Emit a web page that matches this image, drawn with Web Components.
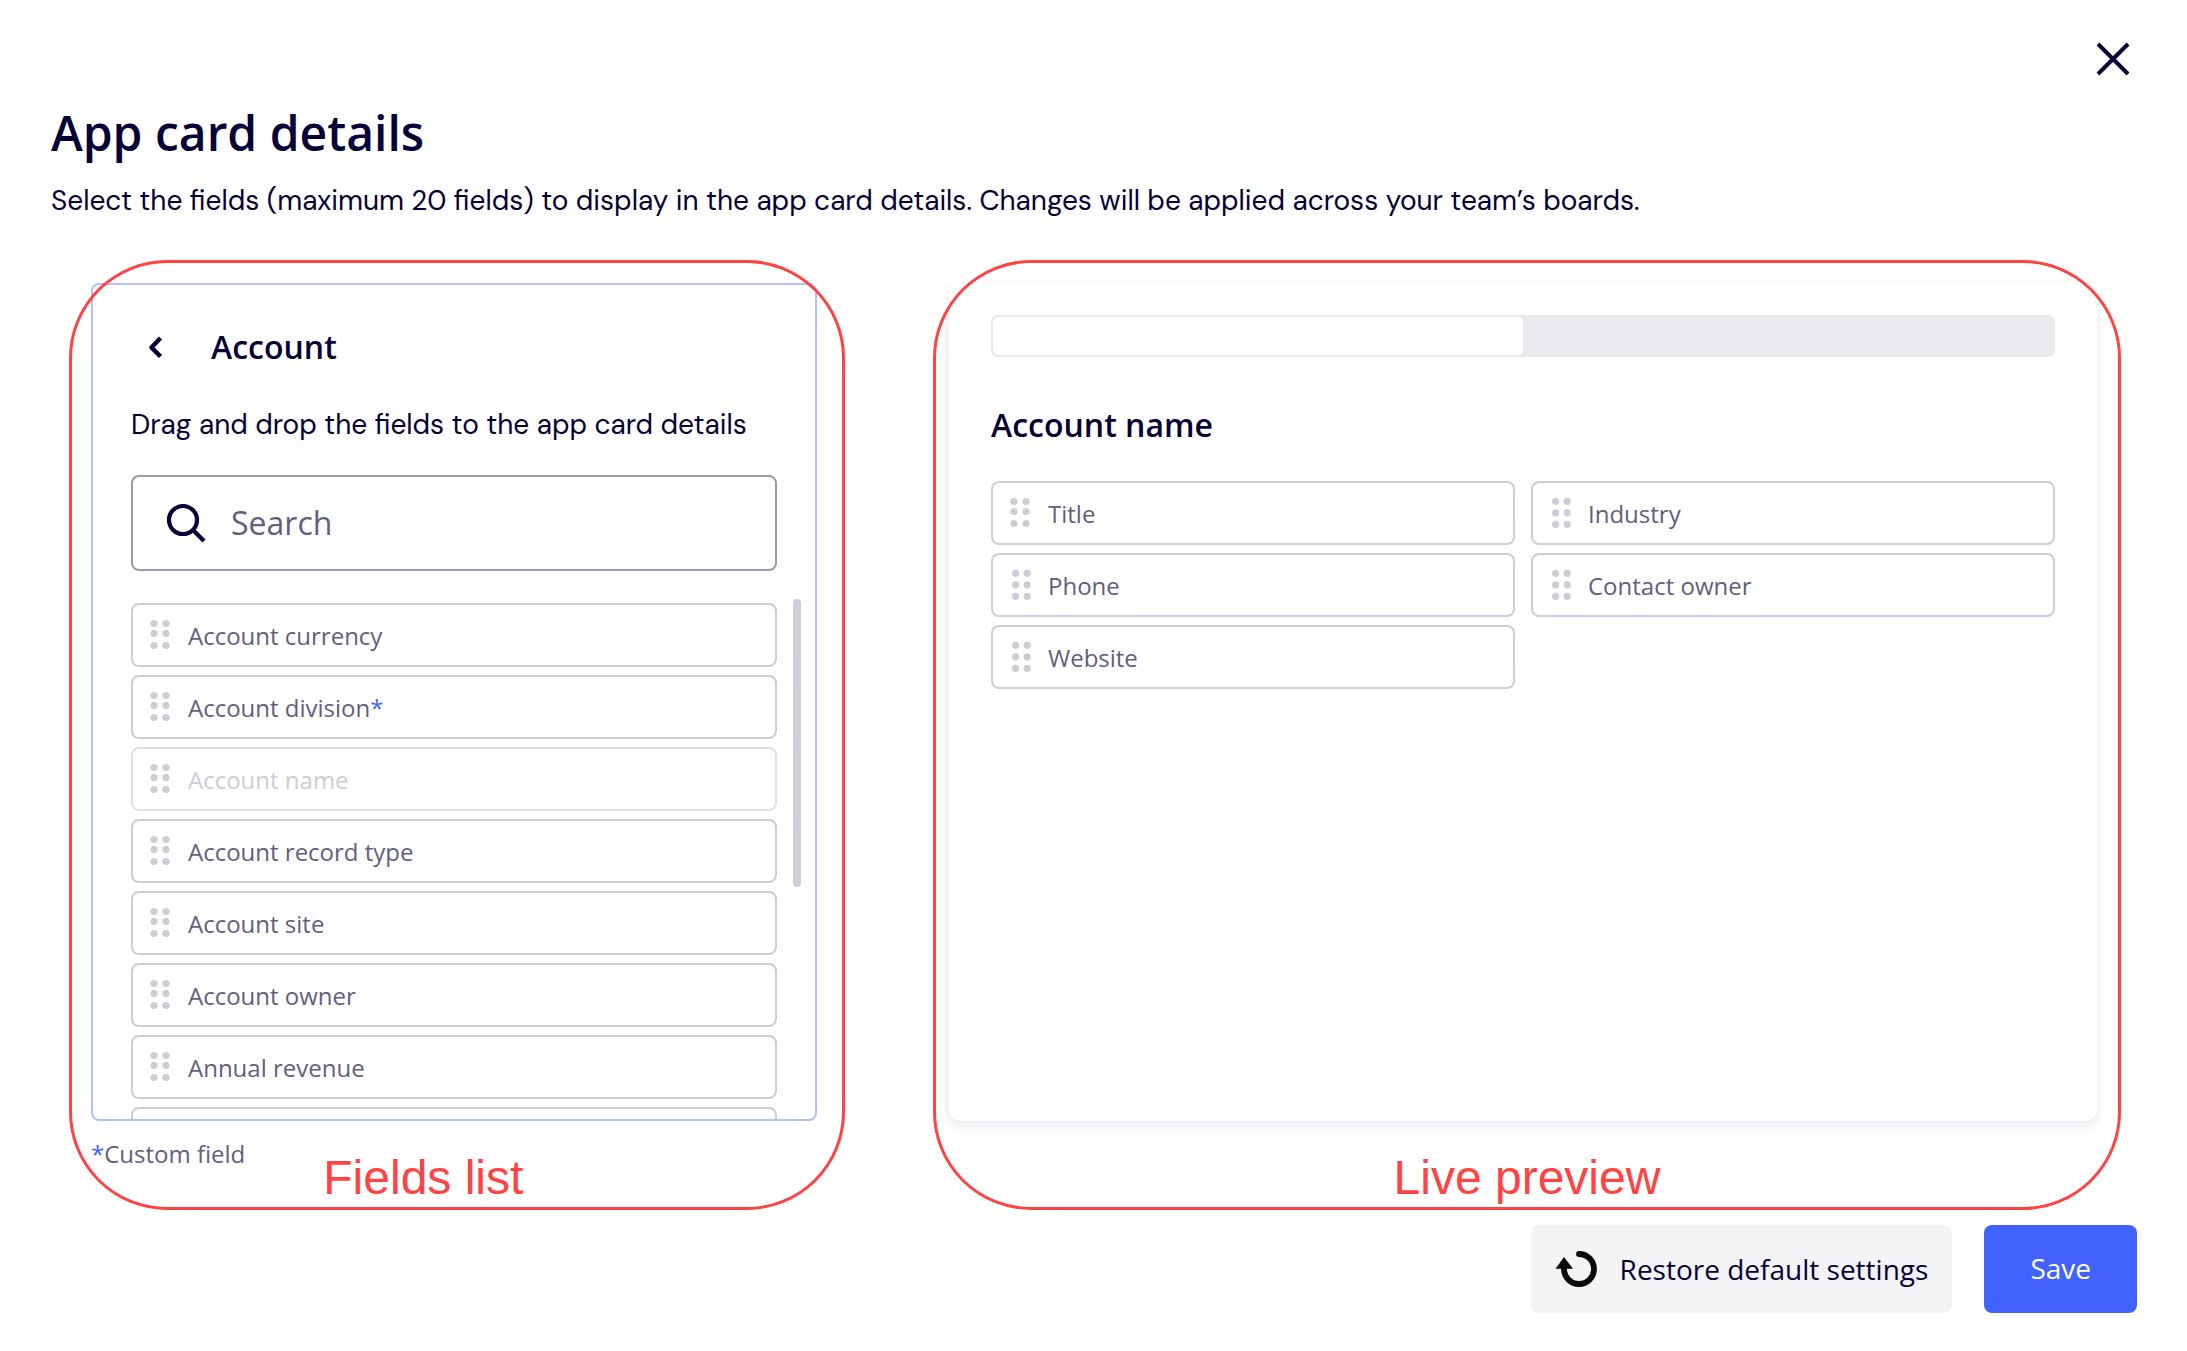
<!DOCTYPE html>
<html lang="en">
<head>
<meta charset="utf-8">
<title>App card details</title>
<style>
  html, body { height: 100%; }
  body {
    margin: 0;
    background: #fff;
    color: #050038;
    font-family: "Open Sans", sans-serif;
    --ink: #050038;
    --muted: #625e80;
    --faint: #cdccd7;
    --blue: #4262ff;
    --mark: #ff4343;
    --copy: "DM Sans", Inter, sans-serif;
  }
</style>
</head>
<body>

<card-dialog>
  <field-list slot="fields" heading="Account" hint="Drag and drop the fields to the app card details">
    <field-chip>Account currency</field-chip>
    <field-chip custom>Account division</field-chip>
    <field-chip disabled>Account name</field-chip>
    <field-chip>Account record type</field-chip>
    <field-chip>Account site</field-chip>
    <field-chip>Account owner</field-chip>
    <field-chip>Annual revenue</field-chip>
    <field-chip></field-chip>
  </field-list>
  <live-preview slot="preview" heading="Account name">
    <field-chip>Title</field-chip>
    <field-chip even>Industry</field-chip>
    <field-chip even>Phone</field-chip>
    <field-chip even>Contact owner</field-chip>
    <field-chip even>Website</field-chip>
  </live-preview>
</card-dialog>

<script>
'use strict';

/* ── <field-chip> : one draggable field ──────────────────── */
class FieldChip extends HTMLElement {

  constructor() {
    super();
    this.attachShadow({ mode: 'open' });
  }

  connectedCallback() {
    /* "even" spreads the grip dots evenly */
    const even = this.hasAttribute('even');
    const cols = even ? [24.6, 36.2] : [23, 35];
    const rows = even ? [20.3, 31.8, 43.3] : [20.5, 30.5, 42.5];
    const dots = rows.map(y => cols.map(x =>
      `<circle cx="${x - 16}" cy="${y - 16}" r="3.6"/>`).join('')).join('');
    const star = this.hasAttribute('custom') ? '<span class="star">*</span>' : '';

    this.shadowRoot.innerHTML = `
      <style>
        :host {
          display: flex;
          align-items: center;
          flex-shrink: 0;
          box-sizing: border-box;
          height: 64px;
          padding: 0 14px;
          gap: 17px;
          border: 2px solid var(--faint);
          border-radius: 8px;
          color: var(--muted);
          font-size: 24px;
          line-height: 32px;
          cursor: grab;
        }
        :host([disabled]) { border-color: #e1e0e7; color: var(--faint); cursor: default; }
        svg    { flex-shrink: 0; fill: var(--faint); }
        .label { padding-top: 2px; }
        .star  { color: var(--blue); }
      </style>
      <svg width="24" height="32" viewBox="0 0 24 32" aria-hidden="true">${dots}</svg>
      <span class="label"><slot></slot>${star}</span>
    `;
  }
}

/* ── <marked-area> : red outline with a caption below ────── */
class MarkedArea extends HTMLElement {

  constructor() {
    super();
    this.attachShadow({ mode: 'open' });
  }

  connectedCallback() {
    this.shadowRoot.innerHTML = `
      <style>
        :host {
          position: relative;
          display: flex;
          flex-direction: column;
          box-sizing: border-box;
          min-height: 0;
          padding: 23px 28px 0 22px;
        }
        :host([centered]) { padding: 23px 24px 0 16px; }
        /* the outline lies over the corners of the card */
        .ring {
          position: absolute;
          inset: 0;
          border: 3px solid var(--mark);
          border-radius: 98px;
          pointer-events: none;
        }
        .body { flex: 1; min-height: 0; display: flex; flex-direction: column; }
        footer {
          display: flex;
          gap: 78px;
          height: 89px;
          box-sizing: border-box;
          padding-top: 17px;
        }
        :host([centered]) footer { justify-content: center; padding-left: 8px; }
        .caption {
          color: var(--mark);
          font: 48px/56px "Liberation Sans", Arial, sans-serif;
          padding-top: 12px;
        }
      </style>
      <div class="body"><slot></slot></div>
      <footer><slot name="note"></slot><span class="caption">${this.getAttribute('caption')}</span></footer>
      <div class="ring"></div>
    `;
  }
}

/* ── <field-list> : back link, search box, scrolling list ── */
class FieldList extends HTMLElement {

  constructor() {
    super();
    this.attachShadow({ mode: 'open' });
  }

  connectedCallback() {
    this.shadowRoot.innerHTML = `
      <style>
        :host {
          display: flex;
          flex-direction: column;
          flex: 1;
          min-height: 0;
          box-sizing: border-box;
          border: 2px solid #b3c0ff;
          border-radius: 8px;
          padding: 38px 14px 0 38px;
          overflow: hidden;
        }
        header { display: flex; align-items: center; gap: 32px; height: 48px; }
        button {
          display: flex;
          align-items: center;
          justify-content: center;
          width: 48px;
          height: 48px;
          padding: 0;
          border: 0;
          background: none;
          cursor: pointer;
        }
        h2 { margin: 0; font-size: 32px; line-height: 48px; font-weight: 600; }
        p  {
          margin: 34px 24px 0 0;
          font: 28px/40px var(--copy);
          white-space: nowrap;
        }
        .search {
          display: flex;
          align-items: center;
          gap: 24px;
          flex-shrink: 0;
          box-sizing: border-box;
          height: 96px;
          margin: 30px 24px 0 0;
          padding: 0 32px;
          border: 2px solid #9b99af;
          border-radius: 8px;
        }
        .search svg { flex-shrink: 0; }
        input {
          flex: 1;
          min-width: 0;
          padding: 0;
          border: 0;
          outline: 0;
          background: none;
          color: var(--ink);
          font: 32px/48px "Open Sans", sans-serif;
        }
        input::placeholder { color: var(--muted); opacity: 1; }
        .scroll {
          display: flex;
          gap: 16px;
          flex: 1;
          min-height: 0;
          margin-top: 28px;
        }
        .items {
          flex: 1;
          display: flex;
          flex-direction: column;
          gap: 8px;
          padding-top: 4px;
          overflow: hidden;
        }
        .thumb { width: 8px; height: 288px; border-radius: 4px; background: var(--faint); }
      </style>
      <header>
        <button type="button" aria-label="Back">
          <svg width="24" height="24" viewBox="0 0 24 24" fill="none" stroke="#050038" stroke-width="4.5"><path d="M17.5 3 8.500 12.500l9 9" stroke-linejoin="round"/></svg>
        </button>
        <h2>${this.getAttribute('heading')}</h2>
      </header>
      <p>${this.getAttribute('hint')}</p>
      <label class="search">
        <svg width="42" height="42" viewBox="0 0 42 42" fill="none" stroke="#050038" stroke-width="4.2"><circle cx="18" cy="18" r="14"/><path d="m28 28 11 11"/></svg>
        <input type="search" placeholder="Search" aria-label="Search">
      </label>
      <div class="scroll">
        <div class="items"><slot></slot></div>
        <div class="thumb"></div>
      </div>
    `;
  }
}

/* ── <live-preview> : tabs and the chosen fields ─────────── */
class LivePreview extends HTMLElement {

  constructor() {
    super();
    this.attachShadow({ mode: 'open' });
  }

  connectedCallback() {
    this.shadowRoot.innerHTML = `
      <style>
        :host {
          display: flex;
          flex-direction: column;
          flex: 1;
          min-height: 0;
          box-sizing: border-box;
          padding: 32px 42px;
          border-radius: 12px;
          background: #fff;
          box-shadow: 0 4px 12px rgba(5, 0, 56, 0.1);
        }
        .tabs {
          display: flex;
          box-sizing: border-box;
          height: 42px;
          padding: 2px;
          border-radius: 6px;
          background: #eae9ee;
        }
        .tabs button { flex: 1; padding: 0; border: 0; border-radius: 6px; background: none; }
        .tabs button.on { background: #fff; }
        h2 { margin: 44px 0 0; font-size: 32px; line-height: 48px; font-weight: 600; }
        .grid {
          display: grid;
          grid-template-columns: 1fr 1fr;
          gap: 8px 16px;
          margin-top: 32px;
        }
      </style>
      <div class="tabs" role="tablist">
        <button type="button" class="on" role="tab" aria-selected="true" aria-label="First tab"></button>
        <button type="button" role="tab" aria-selected="false" aria-label="Second tab"></button>
      </div>
      <h2>${this.getAttribute('heading')}</h2>
      <div class="grid"><slot></slot></div>
    `;
  }
}

/* ── <action-button> : footer button, plain or primary ───── */
class ActionButton extends HTMLElement {

  constructor() {
    super();
    this.attachShadow({ mode: 'open' });
  }

  connectedCallback() {
    this.shadowRoot.innerHTML = `
      <style>
        :host { display: block; }
        button {
          display: flex;
          align-items: center;
          justify-content: center;
          gap: 21px;
          height: 88px;
          padding: 0 24px;
          border: 0;
          border-radius: 8px;
          background: #f4f4f7;
          color: var(--ink);
          font: 28px/40px "Open Sans", sans-serif;
          white-space: nowrap;
          cursor: pointer;
        }
        :host([primary]) button { padding: 0 46px 2px; background: var(--blue); color: #fff; }
      </style>
      <button type="button"><slot name="icon"></slot><slot></slot></button>
    `;
  }
}

/* ── <card-dialog> : the whole dialog ────────────────────── */
class CardDialog extends HTMLElement {

  constructor() {
    super();
    this.attachShadow({ mode: 'open' });
  }

  connectedCallback() {
    this.shadowRoot.innerHTML = `
      <style>
        :host {
          display: flex;
          flex-direction: column;
          box-sizing: border-box;
          height: 100%;
          padding: 35px 50px 38px 51px;
        }
        .top { display: flex; justify-content: flex-end; }
        .close {
          display: flex;
          padding: 0;
          border: 0;
          background: none;
          cursor: pointer;
        }
        h1 { margin: 18px 0 0; font-size: 48px; line-height: 64px; font-weight: 600; }
        .lead { margin: 16px 0 0; font: 28px/40px var(--copy); }
        main {
          display: grid;
          grid-template-columns: 776fr 1188fr;
          grid-template-rows: minmax(0, 1fr);
          gap: 88px;
          flex: 1;
          min-height: 0;
          margin: 39px 16px 0 18px;
        }
        .note { color: var(--muted); font-size: 24px; line-height: 32px; }
        .note b { color: var(--blue); font-weight: 400; }
        .actions {
          display: flex;
          justify-content: flex-end;
          gap: 32px;
          margin-top: 15px;
        }
      </style>
      <div class="top">
        <button class="close" type="button" aria-label="Close">
          <svg width="48" height="48" viewBox="0 0 48 48" fill="none" stroke="#050038" stroke-width="4"><path d="m9 9 30 30M39 9 9 39"/></svg>
        </button>
      </div>
      <h1>App card details</h1>
      <p class="lead">Select the fields (maximum 20 fields) to display in the app card details. Changes will be applied across your team&rsquo;s boards.</p>
      <main>
        <marked-area caption="Fields list">
          <slot name="fields"></slot>
          <span class="note" slot="note"><b>*</b>Custom field</span>
        </marked-area>
        <marked-area caption="Live preview" centered>
          <slot name="preview"></slot>
        </marked-area>
      </main>
      <div class="actions">
        <action-button>
          <svg slot="icon" width="44" height="40" viewBox="0 0 44 40"><path d="M24 5A15 15 0 1 1 9 20" fill="none" stroke="#0a0a0a" stroke-width="5.8" stroke-linecap="round"/><path d="M9 8 .500 19.800h17.500z" fill="#0a0a0a"/></svg>
          Restore default settings
        </action-button>
        <action-button primary>Save</action-button>
      </div>
    `;
  }
}

customElements.define('field-chip', FieldChip);
customElements.define('marked-area', MarkedArea);
customElements.define('field-list', FieldList);
customElements.define('live-preview', LivePreview);
customElements.define('action-button', ActionButton);
customElements.define('card-dialog', CardDialog);
</script>
</body>
</html>
